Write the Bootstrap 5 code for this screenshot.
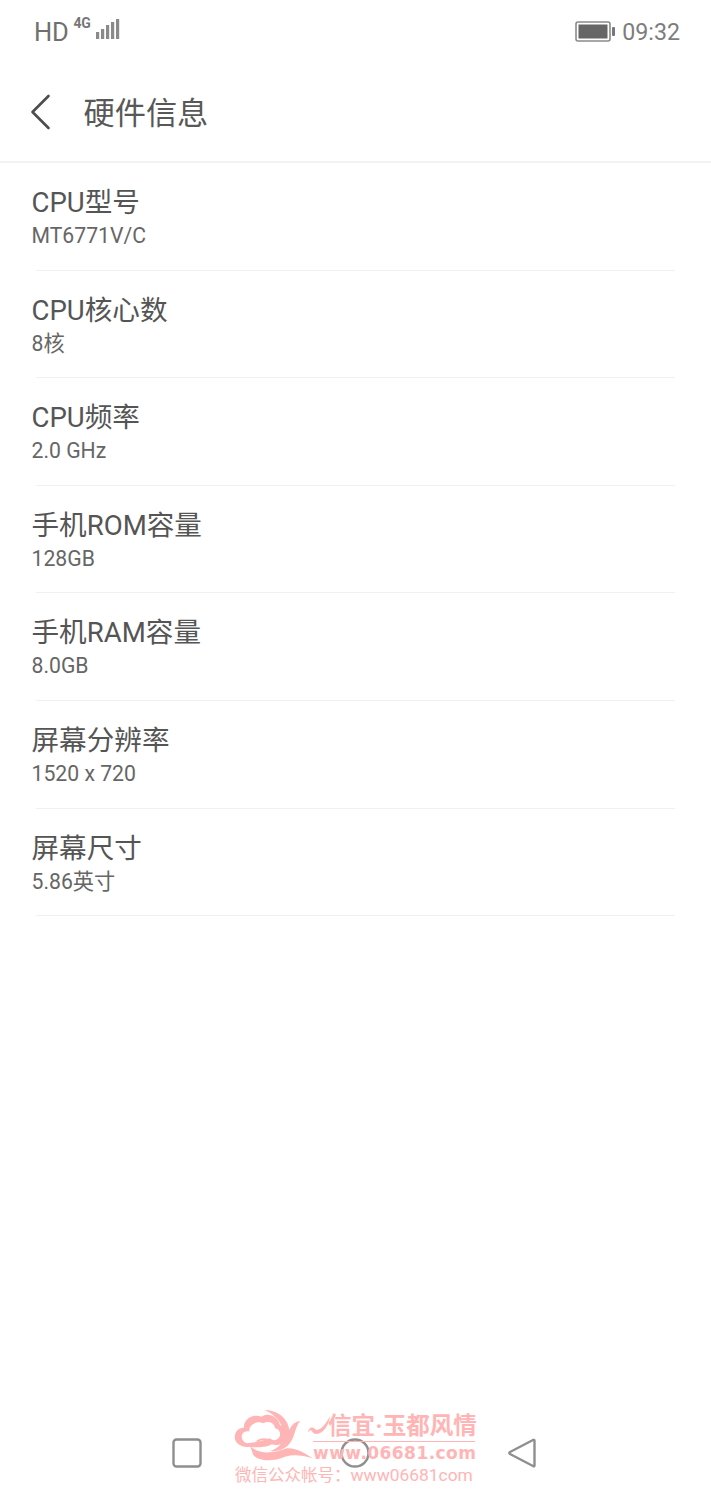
<!DOCTYPE html>
<html lang="zh">
<head>
<meta charset="utf-8">
<title>硬件信息</title>
<link rel="stylesheet" href="https://cdn.jsdelivr.net/npm/bootstrap@5.3.0/dist/css/bootstrap.min.css">
<style>
html,body{background:#fff;height:100%;}
body{font-family:Roboto,"Noto Sans CJK SC",sans-serif;color:#4a4a4a;}
.phone{height:1500px;position:relative;overflow:hidden;}
.sbar{height:63px;padding:0 31px 0 34px;color:#6f6f6f;}
.hd{font-size:25.500px;line-height:1;margin-top:20px;letter-spacing:-.2px;}
.net{font-size:14px;font-weight:700;line-height:1;margin:16px 0 0 5px;letter-spacing:-.3px;color:#777;}
.sig{margin:18px 0 0 5px;}
.bat{margin-top:20px;}
.clock{font-size:23.200px;line-height:1;margin:21px 0 0 6px;color:#7d7d7d;}
.tbar{height:100px;padding-left:30px;border-bottom:2px solid #f2f2f2;}
.ttl{font-size:31.200px;line-height:1;color:#585858;margin-top:3px;margin-left:32.500px;}
.item{height:107.600px;padding:23px 36px 0 31.500px;position:relative;}
.item::after{content:"";position:absolute;left:36px;right:36px;bottom:0;height:1px;background:#f0f0f0;}
.iname{font-size:27.600px;line-height:33px;color:#555;}
.ival{font-size:21.200px;line-height:34px;color:#666;}
.navi{position:absolute;left:0;right:0;top:1438px;gap:138px;padding-right:3px;}
.navtri{margin-left:-1px;}
.mark1{position:absolute;left:233px;top:1409px;width:246px;height:80px;color:#ffb5b5;pointer-events:none;}
.mlogo{position:absolute;left:-3px;top:-4px;}
.mflour{position:absolute;left:74px;top:5px;}
.m-top{position:absolute;left:95px;top:3px;font-size:23.500px;line-height:28px;font-family:"Liberation Serif","Noto Sans CJK SC",serif;font-weight:700;white-space:nowrap;}
.m-rule{position:absolute;left:80px;right:4px;top:32px;height:1px;background:#ffb5b5;}
.m-url{position:absolute;left:80px;top:34px;font-size:17px;line-height:20px;font-weight:700;white-space:nowrap;letter-spacing:.45px;font-family:"DejaVu Sans",sans-serif;}
.m-foot{position:absolute;left:2px;top:55px;font-size:16.500px;line-height:22px;white-space:nowrap;}
.m-latin{font-size:17.400px;}
</style>
</head>
<body>
<div class="phone d-flex flex-column">
  <div class="sbar d-flex align-items-start flex-shrink-0">
    <span class="hd">HD</span>
    <span class="net">4G</span>
    <svg class="sig" width="24" height="22" viewBox="0 0 24 22"><g fill="#8a8a8a"><rect x="0" y="14" width="3.200" height="7"/><rect x="5" y="11" width="3.200" height="10"/><rect x="10" y="7" width="3.200" height="14"/><rect x="15" y="4" width="3.200" height="17"/><rect x="20" y="1" width="3.200" height="20"/></g></svg>
    <span class="ms-auto d-flex align-items-start">
      <svg class="bat" width="41" height="23" viewBox="0 0 41 23"><rect x="1" y="2" width="34" height="19" rx="2" fill="none" stroke="#8a8a8a" stroke-width="1.600"/><rect x="3.500" y="4.500" width="29" height="14" fill="#666"/><rect x="37" y="7" width="3" height="9" rx="1" fill="#777"/></svg>
      <span class="clock">09:32</span>
    </span>
  </div>
  <div class="tbar d-flex align-items-center flex-shrink-0">
    <svg width="21" height="36" viewBox="0 0 21 36"><path d="M18.500 2 2.500 18 18.500 34" fill="none" stroke="#4d4d4d" stroke-width="2.600" stroke-linecap="round" stroke-linejoin="round"/></svg>
    <div class="ttl">硬件信息</div>
  </div>
  <div class="d-flex flex-column">
    <div class="item"><div class="iname">CPU型号</div><div class="ival">MT6771V/C</div></div>
    <div class="item"><div class="iname">CPU核心数</div><div class="ival">8核</div></div>
    <div class="item"><div class="iname">CPU频率</div><div class="ival">2.0 GHz</div></div>
    <div class="item"><div class="iname">手机ROM容量</div><div class="ival">128GB</div></div>
    <div class="item"><div class="iname">手机RAM容量</div><div class="ival">8.0GB</div></div>
    <div class="item"><div class="iname">屏幕分辨率</div><div class="ival">1520 x 720</div></div>
    <div class="item"><div class="iname">屏幕尺寸</div><div class="ival">5.86英寸</div></div>
  </div>
  <div class="navi d-flex justify-content-center">
    <svg width="30" height="30" viewBox="0 0 30 30"><rect x="1.500" y="1.500" width="27" height="27" rx="3" fill="none" stroke="#8f8f8f" stroke-width="2.400"/></svg>
    <svg width="30" height="30" viewBox="0 0 30 30"><circle cx="15" cy="15" r="13.500" fill="none" stroke="#8f8f8f" stroke-width="2.400"/></svg>
    <svg class="navtri" width="30" height="30" viewBox="0 0 30 30"><path d="M27.500 2.500V27.500Q27.500 29 26 28L3 16Q1.500 15 3 14L26 2Q27.500 1.500 27.500 2.500Z" fill="none" stroke="#8f8f8f" stroke-width="2.400" stroke-linejoin="round"/></svg>
  </div>
  <div class="mark1">
    <svg class="mlogo" width="110" height="60" viewBox="0 0 330 180">
      <path fill="#ffb5b5" d="M60 125C30 130 10 110 15 90 18 75 30 68 42 68 40 45 65 25 95 35 115 20 145 35 150 60 165 65 175 80 172 95 165 115 145 125 125 118 115 125 85 130 60 125Z"/>
      <path fill="#fff" d="M50 115C35 110 30 90 42 82 48 78 55 78 58 80 55 60 80 45 100 55 115 45 135 55 135 70 150 72 155 90 145 100 135 110 125 105 120 100 105 105 80 112 50 115Z"/>
      <path fill="#ffb5b5" d="M60 122C85 150 130 145 170 130 200 128 225 145 248 160 215 150 190 148 165 155 130 170 85 170 70 150Z"/>
      <path fill="#ffb5b5" d="M105 15C140 15 175 40 178 75 185 60 195 50 210 48 195 65 195 100 175 120 160 135 140 140 120 138 150 130 165 105 160 80 155 50 135 30 105 15Z"/>
      <path fill="none" stroke="#ffb5b5" stroke-width="5" stroke-linecap="round" d="M82 108C95 100 110 102 122 108"/>
    </svg>
    <svg class="mflour" width="24" height="24" viewBox="0 0 24 24"><path fill="#ffb5b5" d="M1 18C2 13 6 12 9 16 14 16 19 10 23 2 22 10 17 20 9 20 6 20 5 16 3 16 2 17 2 18 1 18Z"/></svg>
    <div class="m-top">信宜·玉都风情</div>
    <div class="m-rule"></div>
    <div class="m-url">www.06681.com</div>
    <div class="m-foot">微信公众帐号：<span class="m-latin">www06681com</span></div>
  </div>
</div>
<script src="https://cdn.jsdelivr.net/npm/bootstrap@5.3.0/dist/js/bootstrap.bundle.min.js"></script>
</body>
</html>
